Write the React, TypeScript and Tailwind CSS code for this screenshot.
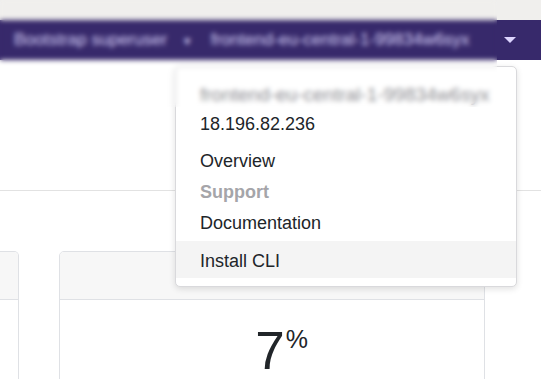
import React from 'react';

const font = { fontFamily: '"Liberation Sans", Arial, sans-serif' };

// --- Dropdown menu ---
const Menu: React.FC = () => (
  <div className="absolute left-[175px] top-[66px] w-[342px] h-[221px] bg-white border border-[#d9d9dc] rounded-[5px] shadow-[0_2px_6px_rgba(0,0,0,0.12)] pt-[6px] pb-[8px] text-[18px] leading-[20px] text-[#212529]">
    <div className="h-[34px] pl-[24px] pt-[12px] text-[19px] text-[#8e8e93] whitespace-nowrap">frontend-eu-central-1-99834w6syx</div>
    <div className="h-[37px] pl-[24px] pt-[7px]">18.196.82.236</div>
    <div className="h-[37px] pl-[24px] pt-[7px]">Overview</div>
    <div className="h-[25px] pl-[24px] pt-[1px] font-bold text-[#a5a5a9]">Support</div>
    <div className="h-[35px] pl-[24px] pt-[7px]">Documentation</div>
    <div className="h-[37px] pl-[24px] pt-[10px] bg-[#f4f4f4]">Install CLI</div>
  </div>
);

// --- Card ---
const Card: React.FC<{ className?: string; children?: React.ReactNode }> = ({ className = '', children }) => (
  <div className={`border border-[#dfe1e5] rounded-[5px] bg-white overflow-hidden ${className}`}>
    <div className="h-[48px] bg-[#f7f7f7] border-b border-[#dfe1e5]" />
    <div className="h-[120px]">{children}</div>
  </div>
);

export default function App() {
  return (
    <div className="relative w-[541px] h-[379px] overflow-hidden bg-white" style={font}>
      {/* top chrome */}
      <div className="h-[20px] bg-[#f0efed]" />

      {/* navbar */}
      <div className="h-[40px] bg-[#37296b] flex items-center text-[17px] text-[#d6cff7] whitespace-nowrap">
        <div className="w-[497px] flex items-center pl-[14px] gap-[18px] overflow-hidden">
          <span>Bootstrap superuser <span className="text-[11px] pl-[10px]">▼</span></span>
          <span className="text-[17px]">frontend-eu-central-1-99834w6syx</span>
        </div>
        <div className="flex-1 flex items-center pl-[7px]">
          <span className="w-0 h-0 border-l-[6px] border-r-[6px] border-t-[6px] border-l-transparent border-r-transparent border-t-[#ddd5ff]" />
        </div>
      </div>

      {/* page header area */}
      <div className="h-[131px] border-b border-[#e2e2e2]" />

      {/* cards */}
      <div className="flex gap-[40px] pt-[60px]">
        <Card className="w-[19px] border-l-0 rounded-l-none" />
        <Card className="w-[426px]">
          <div className="flex justify-center pt-[21px]">
            <span className="relative text-[53px] leading-[60px] text-[#212529] -ml-[4px]">
              7
              <span className="absolute left-full top-[3px] pl-[1px] text-[25px] leading-[30px]">%</span>
            </span>
          </div>
        </Card>
      </div>

      <Menu />

      {/* redacted region */}
      <div className="absolute left-0 top-0 w-[497px] h-[107px] backdrop-blur-[2.5px]" />
    </div>
  );
}
